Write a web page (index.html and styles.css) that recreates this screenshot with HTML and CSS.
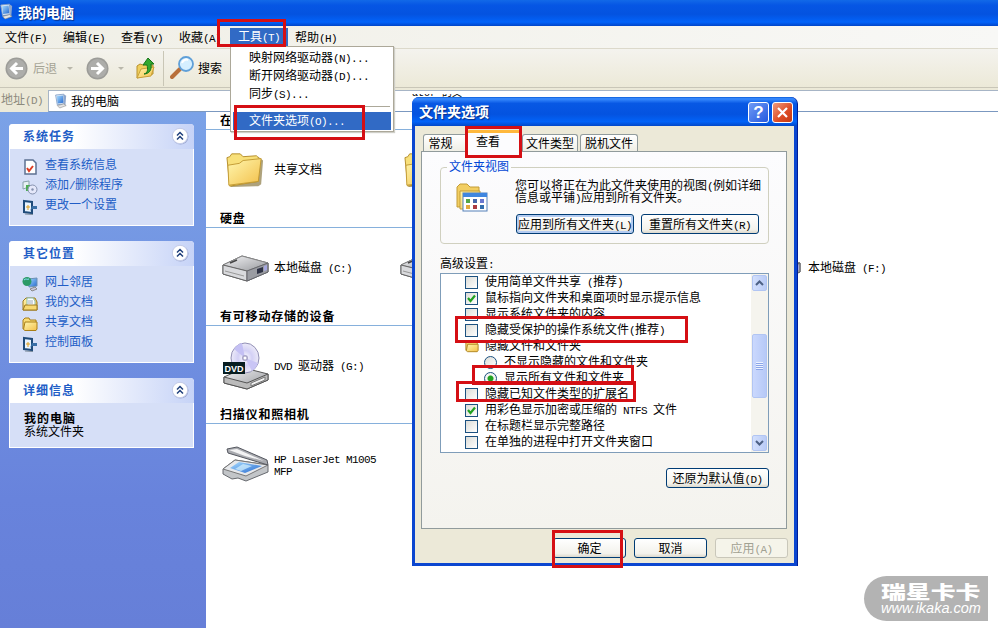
FILE: index.html
```html
<!DOCTYPE html>
<html lang="zh-CN">
<head>
  <meta charset="UTF-8">
  <title>我的电脑</title>
  <link rel="stylesheet" href="styles.css">
</head>
<body>
<svg width="0" height="0" class="defs">
  <defs>
    <linearGradient id="gold" x1="0" y1="0" x2="1" y2="1"><stop offset="0" stop-color="#fff7b0"/><stop offset="1" stop-color="#f3c04a"/></linearGradient>
    <linearGradient id="metal" x1="0" y1="0" x2="1" y2="1"><stop offset="0" stop-color="#f4f4f6"/><stop offset="1" stop-color="#96989c"/></linearGradient>
    <linearGradient id="screen" x1="0" y1="0" x2="1" y2="1"><stop offset="0" stop-color="#a8dcff"/><stop offset="1" stop-color="#2468cf"/></linearGradient>
    <radialGradient id="disc"><stop offset="0" stop-color="#fff"/><stop offset=".5" stop-color="#d3d0f5"/><stop offset="1" stop-color="#eceaf8"/></radialGradient>
    <symbol id="pc" viewBox="0 0 16 18">
      <path d="M2 1l10-1 1 12-9 1z" fill="#dfe9f5" stroke="#7f9dc4"/>
      <path d="M3.500 2.300l7.500-.8.8 9-7.300.9z" fill="url(#screen)"/>
      <path d="M12 0l3 2-1 12-2-2z" fill="#8fa7cc"/>
      <path d="M4 14l8-2 3 2-8 3z" fill="#e4e4e4" stroke="#888" stroke-width=".7"/>
    </symbol>
    <symbol id="folder" viewBox="0 0 16 16">
      <path d="M1 13V4l2-2h4l1 2h6v2" fill="#f9dc75" stroke="#a97e17"/>
      <path d="M1.500 13.500L3 6h12v7l-1 1.500H3z" fill="url(#gold)" stroke="#a97e17"/>
    </symbol>
    <symbol id="bigfolder" viewBox="0 0 40 38">
      <path d="M4 36L1 7l3-1 2-4h9l3 4 15-2 5 4-2 25-3 2z" fill="#8b7a45" opacity=".7" transform="translate(1 1)"/>
      <path d="M1 6l3-1 2-3h9l3 3 14-1 3 3-1 24-30 5z" fill="#f8e07a" stroke="#b48c28"/>
      <path d="M3 35L2 14l12-2 4-3 19-2-3 24z" fill="url(#gold)" stroke="#c29a33"/>
    </symbol>
    <symbol id="drive" viewBox="0 0 48 28">
      <path d="M1 11L20 2l26 7v9L25 27 1 20z" fill="#777" stroke="#55575c"/>
      <path d="M1 11L20 2l26 7-21 8z" fill="url(#metal)" stroke="#888"/>
      <path d="M1 11l24 6v10L1 20z" fill="#d9dadd" stroke="#666"/>
      <path d="M25 17l21-8v9l-21 9z" fill="#9a9ca2" stroke="#66676c"/>
      <path d="M35 15l6-2v5l-6 2z" fill="#2f3346"/><path d="M42 12l3-1v5l-3 1z" fill="#a5a7e0"/>
      <path d="M8 9l7-3" stroke="#444" stroke-width="1.500"/><path d="M3 17l19 5" stroke="#999"/>
    </symbol>
    <symbol id="panel" viewBox="0 0 16 16">
      <path d="M2 2l8 1v11l-8-1z" fill="#e9f4ff" stroke="#1f4b7a" stroke-width="2"/>
      <path d="M6 6v5M4 8h4" stroke="#e0a020"/><path d="M10 7h5v3h-5l-2 2z" fill="#3a6fa6"/>
      <path d="M3 15l8 .5" stroke="#7c8c9c"/>
    </symbol>
    <symbol id="chev" viewBox="0 0 18 18">
      <circle cx="9.500" cy="9.500" r="8" fill="#9aa6d0"/><circle cx="9" cy="9" r="7.700" fill="#fff" stroke="#c3cbe8"/>
      <path d="M6 8.500l3-3 3 3M6 12.500l3-3 3 3" fill="none" stroke="#20407c" stroke-width="1.500"/>
    </symbol>
    <symbol id="tick" viewBox="0 0 13 13"><path d="M3 6l2.500 3L10 3.500" fill="none" stroke="#21a121" stroke-width="2.200"/></symbol>
  </defs>
</svg>

<div class="window">
  <header class="titlebar"><svg class="title-icon"><use href="#pc"/></svg>我的电脑</header>
  <nav class="menubar">
    <span>文件<i>(F)</i></span><span>编辑<i>(E)</i></span><span>查看<i>(V)</i></span><span>收藏<i>(A)</i></span><span class="open">工具<i>(T)</i></span><span>帮助<i>(H)</i></span>
  </nav>
  <div class="toolbar">
    <svg width="23" height="23" viewBox="0 0 23 23"><circle cx="11.500" cy="11.500" r="11" fill="#9c9c98"/><circle cx="11.500" cy="11.500" r="9.500" fill="#adadaa"/><path d="M18 11.500H7M12 6l-5.500 5.500L12 17" fill="none" stroke="#fff" stroke-width="3"/></svg>
    <span class="back">后退</span><b class="caret"></b>
    <svg class="fwd" width="23" height="23" viewBox="0 0 23 23"><circle cx="11.500" cy="11.500" r="11" fill="#9c9c98"/><circle cx="11.500" cy="11.500" r="9.500" fill="#adadaa"/><path d="M5 11.500h11M11 6l5.500 5.500L11 17" fill="none" stroke="#fff" stroke-width="3"/></svg>
    <b class="caret"></b>
    <svg class="up" width="20" height="23" viewBox="0 0 20 23"><path d="M1 21V9l3-2 3 1 2-1 8 1v9z" fill="#f0cf5e" stroke="#b8912c"/><path d="M1 21l4-9 13-2-3 9z" fill="url(#gold)" stroke="#c8a03a"/><path d="M8 17c4-1 4-5 3-9H7l5-7 6 6h-3c1 6-2 10-7 10z" fill="#31a82e" stroke="#17741a"/></svg>
    <span class="divider"></span>
    <svg class="find" width="25" height="24" viewBox="0 0 25 24"><path d="M2 21l8-8" stroke="#b86f3a" stroke-width="4" stroke-linecap="round"/><circle cx="16" cy="8" r="7" fill="#d5efff" stroke="#5f9fd8" stroke-width="1.800"/><path d="M12 7c1-3 4-4 6-3" stroke="#fff" stroke-width="2" fill="none"/></svg>
    <span>搜索</span>
  </div>
  <div class="addressbar">
    <span class="addr-label">地址<i>(D)</i></span>
    <div class="addr-box"><svg width="13" height="17"><use href="#pc"/></svg>我的电脑</div>
  </div>

  <div class="content">
    <aside class="sidebar">
      <section class="card tasks">
        <h2>系统任务<svg width="18" height="18"><use href="#chev"/></svg></h2>
        <ul>
          <li><svg viewBox="0 0 16 16"><path d="M3 1h8l3 3v11H3z" fill="#fff" stroke="#5e7193" stroke-width="1.500"/><path d="M5 9l2 3 4-5" fill="none" stroke="#dd3d24" stroke-width="2"/></svg>查看系统信息</li>
          <li><svg viewBox="0 0 16 16"><path d="M1 3l6-1v6l-6 2z" fill="#e8f1f4" stroke="#8aa2ab"/><path d="M4 6v6h4V6z" fill="#4dac52"/><circle cx="10.500" cy="10.500" r="4.500" fill="#e5e8fa" stroke="#8591ae"/><circle cx="10.500" cy="10.500" r="1.200" fill="#8591ae"/></svg><span>添加<i>/</i>删除程序</span></li>
          <li><svg><use href="#panel"/></svg>更改一个设置</li>
        </ul>
      </section>
      <section class="card places">
        <h2>其它位置<svg width="18" height="18"><use href="#chev"/></svg></h2>
        <ul>
          <li><svg viewBox="0 0 16 16"><path d="M6 3l9-1v8l-8 1z" fill="url(#screen)" stroke="#6c91b5"/><circle cx="5" cy="5.500" r="4.500" fill="#2c9b67"/><path d="M2 4c2-2 3 0 5-1" stroke="#8fe0ff" fill="none"/><path d="M8 13l5-2 2 2-5 2z" fill="#c9c6dc" stroke="#888"/></svg>网上邻居</li>
          <li><svg viewBox="0 0 16 16"><path d="M1 14V5l3-3h9l2 4v8z" fill="url(#gold)" stroke="#9b791c"/><path d="M5 2h6l2 3v6H5z" fill="#fff" stroke="#8ba"/><path d="M6 5h5M6 7h5" stroke="#9ab"/><path d="M1 14l2-5h12v5z" fill="#f7d971" stroke="#9b791c"/></svg>我的文档</li>
          <li><svg><use href="#folder"/></svg>共享文档</li>
          <li><svg><use href="#panel"/></svg>控制面板</li>
        </ul>
      </section>
      <section class="card details">
        <h2>详细信息<svg width="18" height="18"><use href="#chev"/></svg></h2>
        <p><strong>我的电脑</strong><br>系统文件夹</p>
      </section>
    </aside>

    <main class="files">
      <h3 class="first">在</h3>
      <div class="row">
        <div class="file"><svg class="i-folder"><use href="#bigfolder"/></svg><span>共享文档</span></div>
        <div class="file"><svg class="i-folder"><use href="#bigfolder"/></svg></div>
      </div>
      <h3>硬盘</h3>
      <div class="row">
        <div class="file"><svg class="i-drive"><use href="#drive"/></svg><span>本地磁盘<i> (C:)</i></span></div>
        <div class="file"><svg class="i-drive"><use href="#drive"/></svg></div>
        <div class="file far"><svg class="i-drive"><use href="#drive"/></svg><span>本地磁盘<i> (F:)</i></span></div>
      </div>
      <h3>有可移动存储的设备</h3>
      <div class="row">
        <div class="file">
          <svg class="i-dvd" viewBox="0 0 48 48"><path d="M2 35l20-9 24 6v6L25 47 2 41z" fill="url(#metal)" stroke="#555"/><path d="M2 35l23 6 21-9v6l-21 9-23-6z" fill="#bbb" stroke="#555"/><path d="M29 41l14-6v3l-14 6z" fill="#f2f2f2" stroke="#777"/><ellipse cx="23" cy="16" rx="14" ry="15" fill="url(#disc)" stroke="#9290b5"/><path d="M23 16L12 7a14 15 0 0 1 8-6z" fill="#c4c0f4"/><path d="M23 16l13 5a14 15 0 0 1-6 8z" fill="#c9c5f5"/><circle cx="23" cy="16" r="3" fill="#a9a5c8"/><circle cx="23" cy="16" r="1.500" fill="#fff"/><rect x="1" y="20" width="22" height="12" fill="#071d20"/><text x="2.500" y="29.500" class="dvd-text">DVD</text></svg>
          <span><i>DVD </i>驱动器<i> (G:)</i></span>
        </div>
      </div>
      <h3>扫描仪和照相机</h3>
      <div class="row">
        <div class="file">
          <svg class="i-scan" viewBox="0 0 48 36"><path d="M1 23l12-9 33 5v7L24 35l-8-3-6 1-9-5z" fill="#c2c5c8" stroke="#66696e"/><path d="M1 23l12-9 33 5-22 11z" fill="#e6e8eb" stroke="#777"/><path d="M8 22l9-6 23 4-17 7z" fill="url(#screen)"/><path d="M21 18l9 2-11 5-6-2z" fill="#d9f4ff" opacity=".7"/><path d="M5 3l10-2 30 13 1 5-20-6L6 7z" fill="#a9abb0" stroke="#555860"/><path d="M7 4l8-1 27 12-19-5z" fill="#f3f3f4"/></svg>
          <span class="hp"><i>HP LaserJet M1005<br>MFP</i></span>
        </div>
      </div>
    </main>
  </div>
</div>

<div class="behind">ator 的文</div>

<ul class="dropdown">
  <li>映射网络驱动器<i>(N)...</i></li>
  <li>断开网络驱动器<i>(D)...</i></li>
  <li>同步<i>(S)...</i></li>
  <li class="sep"></li>
  <li class="selected">文件夹选项<i>(O)...</i></li>
</ul>

<div class="dialog">
  <header class="dlg-title">
    <span>文件夹选项</span>
    <button class="cap help">?</button>
    <button class="cap close"><svg width="19" height="19" viewBox="0 0 19 19"><path d="M5 5l9 9M14 5l-9 9" stroke="#fff" stroke-width="2.200"/></svg></button>
  </header>
  <div class="dlg-body">
    <div class="tabs"><span class="t1">常规</span><span class="active">查看</span><span class="t3">文件类型</span><span class="t4">脱机文件</span></div>
    <div class="pane">
      <div class="group">
        <span class="legend">文件夹视图</span>
        <svg width="34" height="31" viewBox="0 0 34 31"><path d="M2 24V4l3-3h7l3 3h9v20z" fill="#f2ce62" stroke="#c39c37"/><path d="M5 26V8h20v18z" fill="url(#gold)" stroke="#c39c37"/><rect x="8" y="10" width="24" height="18" fill="#fff" stroke="#5480b8"/><path d="M8 10h24v4H8z" fill="#3f86e0"/><path d="M11 16h4v4h-4z" fill="#55a545"/><path d="M18 16h4v4h-4z" fill="#4567aa"/><path d="M25 16h4v4h-4z" fill="#6a78d0"/><path d="M11 22h4v4h-4z" fill="#e2a93c"/><path d="M18 22h4v4h-4z" fill="#aa3b42"/><path d="M25 22h4v4h-4z" fill="#346fae"/></svg>
        <div class="group-main">
          <p>您可以将正在为此文件夹使用的视图<i>(</i>例如详细<br>信息或平铺<i>)</i>应用到所有文件夹。</p>
          <div class="group-btns"><button class="btn default">应用到所有文件夹<i>(L)</i></button><button class="btn">重置所有文件夹<i>(R)</i></button></div>
        </div>
      </div>
      <div class="adv-label">高级设置<i>:</i></div>
      <div class="list">
        <ul>
          <li><span class="box"></span><span>使用简单文件共享<i> (</i>推荐<i>)</i></span></li>
          <li><span class="box"><svg><use href="#tick"/></svg></span>鼠标指向文件夹和桌面项时显示提示信息</li>
          <li><span class="box"></span>显示系统文件夹的内容</li>
          <li><span class="box"></span><span>隐藏受保护的操作系统文件<i>(</i>推荐<i>)</i></span></li>
          <li><svg class="list-folder"><use href="#folder"/></svg>隐藏文件和文件夹</li>
          <li class="sub"><span class="radio"></span>不显示隐藏的文件和文件夹</li>
          <li class="sub"><span class="radio on"></span>显示所有文件和文件夹</li>
          <li><span class="box"></span>隐藏已知文件类型的扩展名</li>
          <li><span class="box"><svg><use href="#tick"/></svg></span><span>用彩色显示加密或压缩的<i> NTFS </i>文件</span></li>
          <li><span class="box"></span>在标题栏显示完整路径</li>
          <li><span class="box"></span>在单独的进程中打开文件夹窗口</li>
        </ul>
        <div class="scroll">
          <span class="arrow"><svg width="9" height="6"><path d="M1 5l3.500-3.500L8 5" fill="none" stroke="#4d6185" stroke-width="2"/></svg></span>
          <span class="thumb"></span>
          <span class="arrow down"><svg width="9" height="6"><path d="M1 1l3.500 3.500L8 1" fill="none" stroke="#4d6185" stroke-width="2"/></svg></span>
        </div>
      </div>
      <button class="btn restore">还原为默认值<i>(D)</i></button>
    </div>
    <footer class="dlg-foot"><button class="btn">确定</button><button class="btn">取消</button><button class="btn off">应用<i>(A)</i></button></footer>
  </div>
</div>

<!-- highlight frames -->
<div class="mark m-tools"></div>
<div class="mark m-options"></div>
<div class="mark m-view"></div>
<div class="mark m-protected"></div>
<div class="mark m-showall"></div>
<div class="mark m-ext"></div>
<div class="mark m-ok"></div>

<div class="logo"><b>瑞星卡卡</b><span>www.ikaka.com</span></div>
</body>
</html>
```
FILE: styles.css
```css
* {
  box-sizing: border-box;
}
body {
  margin: 0;
  width: 998px;
  height: 628px;
  overflow: hidden;
  position: relative;
  background: #fff;
  color: #000;
  font: 12px/16px "Noto Sans CJK SC", sans-serif;
  white-space: nowrap;
}
/* half-width latin, 6px per character */
i {
  font: 11px/0 "Liberation Mono", monospace;
  letter-spacing: -0.6px;
  white-space: pre;
}
svg {
  display: block;
  flex: none;
}
ul, p, h2, h3 {
  margin: 0;
  padding: 0;
  list-style: none;
}
.defs {
  position: absolute;
}

/* explorer window */
.window {
  height: 628px;
  display: flex;
  flex-direction: column;
}
.titlebar {
  height: 26px;
  flex: none;
  display: flex;
  align-items: center;
  padding-bottom: 3px;
  background: linear-gradient(#1269e8, #0656e4 20%, #0453e0 55%, #0263fa 85%, #0145c8);
  color: #fff;
  font-size: 14px;
  font-weight: bold;
  text-shadow: 1px 1px 1px #0a2f86;
}
.title-icon {
  width: 14px;
  height: 18px;
  margin: 1px 5px 0 -1px;
}
.menubar {
  height: 23px;
  flex: none;
  display: flex;
  align-items: center;
  padding: 0 0 0 5px;
  background: linear-gradient(90deg, #f0efe6, #f8f8f6);
  border-bottom: 1px solid #dcd9cb;
}
.menubar span {
  width: 58px;
  line-height: 15px;
  padding-bottom: 1px;
}
.menubar .open {
  width: 58px;
  height: 18px;
  line-height: 16px;
  margin-left: -7px;
  margin-right: 7px;
  padding-left: 8px;
  background: #316ac5;
  color: #fff;
}
.toolbar {
  height: 39px;
  flex: none;
  display: flex;
  align-items: center;
  padding-left: 5px;
  background: linear-gradient(#f4f3ee, #ece9d8);
  border-bottom: 1px solid #c9c6b8;
}
.back {
  margin-left: 5px;
  color: #a5a395;
}
.caret {
  border: 3px solid transparent;
  border-top-color: #b9b7ab;
  border-bottom: 0;
  margin-left: 10px;
}
.fwd {
  margin-left: 13px;
}
.fwd + .caret {
  margin-left: 9px;
}
.up {
  margin-left: 12px;
}
.divider {
  width: 1px;
  height: 35px;
  margin: 0 6px 0 7px;
  background: #c9c6b6;
}
.find {
  margin-right: 3px;
}
.addressbar {
  height: 24px;
  flex: none;
  display: flex;
  background: #ece9d8;
  padding-top: 2px;
}
.addr-label {
  width: 48px;
  padding: 1px 0 0 1px;
  color: #8c8a7d;
}
.addr-box {
  flex: 1;
  display: flex;
  align-items: center;
  gap: 4px;
  padding-left: 5px;
  background: #fff;
  border: 1px solid #a7b5c6;
  border-right: 0;
  border-bottom-color: #7b98c0;
}
.content {
  flex: 1;
  display: flex;
  min-height: 0;
}

/* task pane */
.sidebar {
  width: 206px;
  padding: 12px 12px 0 9px;
  display: flex;
  flex-direction: column;
  gap: 15px;
  background: linear-gradient(#7ba2e7, #6883dc 75%, #667fd8);
}
.card {
  color: #215dc6;
  background: #d6dff7;
  border: 1px solid #fff;
  border-top: 0;
  border-radius: 4px 4px 0 0;
}
.tasks {
  height: 102px;
}
.places {
  height: 122px;
}
.details {
  height: 70px;
}
.card h2 {
  height: 25px;
  display: flex;
  align-items: center;
  justify-content: space-between;
  padding: 0 5px 2px 14px;
  margin: 0 -1px;
  border-radius: 4px 4px 0 0;
  background: linear-gradient(90deg, #fff 35%, #c6d3f7);
  font-size: 12px;
  letter-spacing: 1px;
}
.card ul {
  padding: 5px 0 0 12px;
}
.card li {
  height: 20px;
  display: flex;
  align-items: center;
}
.card li svg {
  width: 16px;
  height: 16px;
  margin: 5px 7px 0 0;
}
.details p {
  padding: 8px 0 0 14px;
  line-height: 13px;
  color: #000;
}
.details strong {
  letter-spacing: 1px;
}

/* file groups */
.files {
  flex: 1;
  overflow: hidden;
}
.files h3 {
  width: 206px;
  height: 18px;
  padding-left: 14px;
  font-size: 12px;
  line-height: 16px;
  letter-spacing: 0.8px;
  border-bottom: 1px solid #86b0dc;
}
.row {
  height: 80px;
  display: flex;
  align-items: center;
}
.file {
  width: 178px;
  flex: none;
  display: flex;
  align-items: center;
  padding-left: 16px;
}
.file svg {
  margin-right: 4px;
}
.file span {
  margin-bottom: 3px;
}
.i-folder {
  width: 38px;
  height: 38px;
  margin-left: 4px;
}
.i-folder + span {
  margin-left: 6px;
}
.i-drive {
  width: 48px;
  height: 28px;
}
.i-dvd {
  width: 48px;
  height: 48px;
}
.i-scan {
  width: 48px;
  height: 36px;
}
.far {
  margin-left: 176px;
}
.far .i-drive {
  margin-right: 6px;
}
.dvd-text {
  font: bold 9px "Liberation Sans", sans-serif;
  fill: #fff;
}
.file .hp {
  line-height: 12px;
  margin-bottom: 0;
}
/* label of an item that is mostly under the dialog */
.behind {
  position: absolute;
  left: 412px;
  top: 88px;
  height: 16px;
  clip-path: inset(6px 0 0 0);
  font: 10px/12px "Liberation Mono", "Noto Sans CJK SC", monospace;
}

/* tools menu */
.dropdown {
  position: absolute;
  left: 230px;
  top: 46px;
  width: 164px;
  height: 86px;
  padding: 2px;
  background: #fff;
  border: 1px solid #aca899;
  box-shadow: 1px 1px 1px #cfcfc8;
}
.dropdown li {
  height: 18px;
  line-height: 16px;
  padding-left: 16px;
}
.dropdown .sep {
  height: 1px;
  margin: 3px 1px 5px;
  background: #aca899;
}
.dropdown .selected {
  color: #fff;
  background: #316ac5;
}

/* folder options */
.dialog {
  position: absolute;
  left: 412px;
  top: 97px;
  width: 386px;
  height: 469px;
  display: flex;
  flex-direction: column;
  border-radius: 7px 7px 0 0;
  background: #0b46d0;
  padding: 0 3px 3px;
  border-right: 1px solid #001e96;
}
.dlg-title {
  height: 29px;
  flex: none;
  display: flex;
  align-items: center;
  gap: 3px;
  margin: 0 -3px;
  padding: 1px 4px 0 7px;
  border-radius: 7px 7px 0 0;
  background: linear-gradient(#0a5cd8, #3a8cff 6%, #0858e4 22%, #0453e0 60%, #0263f8 85%, #0348c8);
  color: #fff;
  font-size: 14px;
  font-weight: bold;
  text-shadow: 1px 1px 1px #0a2f86;
}
.dlg-title span {
  flex: 1;
  margin-bottom: 2px;
}
.cap {
  width: 21px;
  height: 21px;
  padding: 0;
  border: 1px solid #fff;
  border-radius: 3px;
  color: #fff;
  font: bold 17px/19px "Liberation Sans", sans-serif;
}
.help {
  background: linear-gradient(135deg, #6f9bf5, #2458df);
}
.close {
  background: linear-gradient(135deg, #f09a7e, #dc4a22 60%, #c33a14);
}
.dlg-body {
  flex: 1;
  background: #ece9d8;
  padding: 7px 7px 0 6px;
}
.tabs {
  height: 18px;
  display: flex;
  align-items: flex-end;
  padding-left: 2px;
}
.tabs span {
  height: 17px;
  line-height: 16px;
  border: 1px solid #919b9c;
  border-bottom: 0;
  border-radius: 3px 3px 0 0;
  background: linear-gradient(#fff, #f0efe6);
  text-align: center;
}
.tabs .t1 {
  width: 45px;
  padding-right: 10px;
}
.tabs .active {
  width: 54px;
  height: 22px;
  line-height: 16px;
  margin: 0 0 -1px -1px;
  padding-right: 12px;
  border-top: 3px solid #ffb83c;
  background: #fcfcfe;
  position: relative;
}
.tabs .t3 {
  width: 56px;
  margin-left: 1px;
}
.tabs .t4 {
  width: 58px;
  margin-left: 2px;
}
.pane {
  height: 378px;
  display: flex;
  flex-direction: column;
  padding: 15px 17px 0 18px;
  border: 1px solid #919b9c;
  background: linear-gradient(#fcfcfe, #f4f3ee);
}
.group {
  height: 77px;
  flex: none;
  position: relative;
  display: flex;
  gap: 26px;
  padding: 15px 0 0 14px;
  border: 1px solid #d0d0bf;
  border-radius: 4px;
}
.legend {
  position: absolute;
  left: 6px;
  top: -10px;
  padding: 0 2px;
  background: #fcfcfe;
  color: #0046d5;
}
.group p {
  line-height: 12px;
  margin-top: -4px;
}
.group-btns {
  display: flex;
  gap: 7px;
  margin: 11px 0 0 1px;
}
.btn {
  width: 118px;
  height: 20px;
  padding: 0;
  border: 1px solid #003c74;
  border-radius: 3px;
  background: linear-gradient(#fff, #f3f2ec 80%, #dcd8cc);
  color: #000;
  font: 12px/15px "Noto Sans CJK SC", sans-serif;
  padding-bottom: 2px;
  white-space: nowrap;
}
.btn.default {
  box-shadow: inset 0 0 0 2px #b3cbf1;
}
.btn.off {
  color: #a1a192;
  border-color: #c9c7ba;
  background: #f5f4ea;
}
.adv-label {
  margin: 11px 0 2px;
}
.list {
  height: 180px;
  flex: none;
  display: flex;
  justify-content: space-between;
  background: #fff;
  border: 1px solid #7f9db9;
}
.list ul {
  padding-left: 24px;
}
.list li {
  height: 16px;
  line-height: 14px;
  display: flex;
  align-items: flex-start;
}
.box, .radio {
  width: 13px;
  height: 13px;
  margin: 2px 7px 0 0;
  border: 1px solid #1c5180;
  background: linear-gradient(135deg, #dcdcd7, #fff);
}
.box svg {
  width: 13px;
  height: 13px;
  margin: -1px;
}
.list-folder {
  width: 16px;
  height: 14px;
  margin: 1px 5px 0 -1px;
}
.list .sub {
  padding-left: 19px;
}
.radio {
  border-radius: 50%;
}
.radio.on {
  background: radial-gradient(#21a121 2.5px, #f4f4f2 3.5px);
}
.scroll {
  width: 17px;
  display: flex;
  flex-direction: column;
  background: #f5f4ee;
  padding: 1px;
}
.arrow, .thumb {
  border: 1px solid #b1c5f3;
  border-radius: 2px;
  background: linear-gradient(90deg, #d3e0fd, #b9cbf6);
}
.arrow {
  height: 16px;
  display: flex;
  align-items: center;
  justify-content: center;
}
.thumb {
  height: 64px;
  margin-top: 43px;
  background: repeating-linear-gradient(#edf3ff 0 1px, #8ba5e8 1px 2px) center / 7px 8px no-repeat, linear-gradient(90deg, #cad8fd, #b6c9f7);
}
.down {
  margin-top: auto;
}
.restore {
  width: 103px;
  flex: none;
  align-self: flex-end;
  margin-top: 15px;
}
.dlg-foot {
  display: flex;
  justify-content: flex-end;
  gap: 8px;
  padding-top: 9px;
  margin-right: -1px;
}
.dlg-foot .btn {
  width: 73px;
}

.mark {
  position: absolute;
  border: 3px solid #d50f14;
}
.m-tools {
  left: 217px;
  top: 19px;
  width: 69px;
  height: 28px;
}
.m-options {
  left: 234px;
  top: 105px;
  width: 131px;
  height: 35px;
}
.m-view {
  left: 465px;
  top: 126px;
  width: 57px;
  height: 32px;
}
.m-protected {
  left: 455px;
  top: 316px;
  width: 233px;
  height: 27px;
}
.m-showall {
  left: 472px;
  top: 365px;
  width: 162px;
  height: 20px;
}
.m-ext {
  left: 456px;
  top: 381px;
  width: 180px;
  height: 21px;
}
.m-ok {
  left: 552px;
  top: 530px;
  width: 71px;
  height: 38px;
}

.logo {
  position: absolute;
  left: 864px;
  top: 576px;
  width: 124px;
  height: 45px;
  padding: 5px 0 0 17px;
  border-radius: 23px 0 0 23px;
  background: #b3b3b3;
  color: #fff;
}
.logo b {
  display: block;
  width: 76px;
  font-size: 18px;
  line-height: 20px;
  font-weight: 900;
  transform: scaleX(1.38);
  transform-origin: left;
}
.logo span {
  display: block;
  font: italic 14.5px/14px "Liberation Sans", sans-serif;
}
```
